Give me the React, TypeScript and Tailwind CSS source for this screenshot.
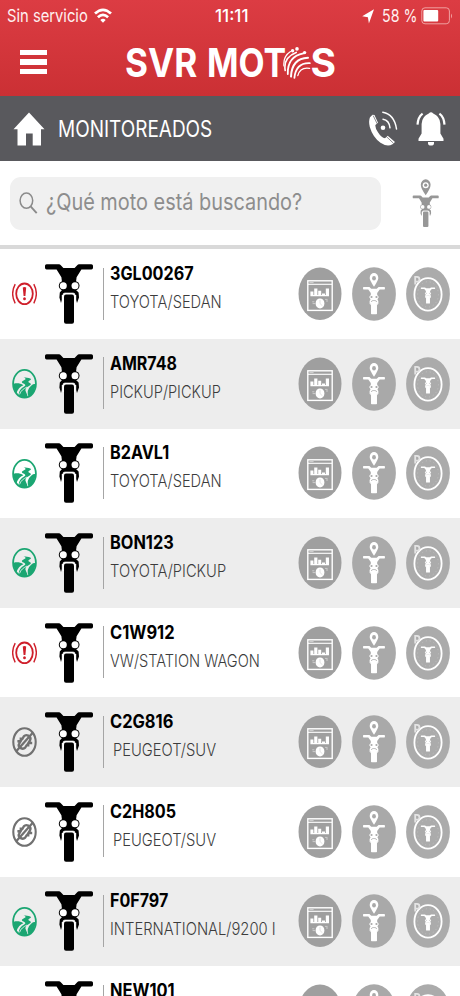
import { useLayoutEffect, useRef, useState } from "react";

type Status = "alert" | "moving" | "offline";

/** One line of text condensed or widened to an exact width. */
function FitText({ text, width, className }: { text: string; width: number; className: string }) {
  const ref = useRef<HTMLSpanElement>(null);
  const [scale, setScale] = useState(1);
  useLayoutEffect(() => {
    if (ref.current) setScale(width / ref.current.offsetWidth);
  }, [text, width]);
  return (
    <div className="flex shrink-0 whitespace-nowrap" style={{ width }}>
      <span ref={ref} className={`shrink-0 origin-left ${className}`} style={{ transform: `scaleX(${scale})` }}>
        {text}
      </span>
    </div>
  );
}

function MotoShape({ color, hole }: { color: string; hole: string }) {
  return (
    <g>
      <path
        d="M1.6 .2H14Q15 .2 15.8 1.2L18.4 4H29.6L32.2 1.2Q33 .2 34 .2H46.4Q48 .2 48 1.8V3.8Q48 5.4 46.4 5.4H36.4L31.6 13.2L31 18H17L16.4 13.2L11.6 5.4H1.6Q0 5.4 0 3.8V1.8Q0 .2 1.6 .2Z"
        fill={color}
      />
      <path d="M17 15H31V26L33.6 28.4L34 33.5L32 39L31.2 36V31H16.8V36L16 39L14.4 33.5L14.8 28.4L17 26Z" fill={color} />
      <circle cx="18.3" cy="21.7" r="4.5" fill={color} />
      <circle cx="30" cy="21.7" r="4.5" fill={color} />
      <circle cx="18.3" cy="21.7" r="3.5" fill={hole} />
      <circle cx="30" cy="21.7" r="3.5" fill={hole} />
      <path d="M17.9 38V31Q17.9 29 19.9 29H28.1Q30.1 29 30.1 31V38" fill={hole} stroke={hole} strokeWidth=".6" />
      <rect x="19" y="30.6" width="10" height="29.2" rx="2" fill={color} />
    </g>
  );
}

/** Simplified front view used inside the small round buttons. */
function MiniMoto({ hole }: { hole: string }) {
  return (
    <g>
      <path
        d="M1.5 0H14L18 3.6H30L34 0H46.5Q48 0 48 2.7T46.5 5.6H36.5L31 13V17.5L34.6 22L31.5 27L33.5 31V37L31.5 40L30.5 34V59Q30.5 60 29 60H19Q17.5 60 17.5 59V34L16.5 40L14.5 37V31L16.5 27L13.4 22L17 17.5V13L11.5 5.6H1.5Q0 5.6 0 2.7T1.5 0Z"
        fill="#fff"
      />
      <circle cx="18.6" cy="22" r="2.4" fill={hole} />
      <circle cx="29.4" cy="22" r="2.4" fill={hole} />
      <path d="M18 33Q18 29.6 24 29.6T30 33" fill="none" stroke={hole} strokeWidth="1.6" />
    </g>
  );
}

function StatusIcon({ status }: { status: Status }) {
  if (status === "alert") {
    return (
      <svg className="h-8 w-[25px] shrink-0" viewBox="0 0 25 32" fill="none" stroke="#cf1f2b">
        <ellipse cx="12.5" cy="15.8" rx="8.3" ry="10.3" strokeWidth="1.8" />
        <path d="M3.2 6.2Q-1.9 15.8 3.2 25.4M21.8 6.2Q26.9 15.8 21.8 25.4" strokeWidth="1.4" />
        <path d="M10.8 9.6Q12.5 8.4 14.2 9.6L13.4 18.1H11.6Z" fill="#cf1f2b" stroke="none" />
        <ellipse cx="12.5" cy="20.7" rx="1.4" ry="1.5" fill="#cf1f2b" stroke="none" />
      </svg>
    );
  }
  if (status === "moving") {
    return (
      <svg className="h-8 w-[25px] shrink-0" viewBox="0 0 25 32" fill="none">
        <path d="M1.8 15.8C5 14.8 8.4 15.4 11.4 17.2Q6.2 19.2 4.6 25.2C2.4 22.6 1.4 19.6 1.8 15.8Z" fill="#1ba672" />
        <path
          d="M11.6 9.2L16.8 9.9Q20.4 10.8 18 12.3Q15 13.8 17.4 14.8Q20.6 16.2 17 18Q11.6 20.6 14.2 24.4Q15.6 26.6 15.6 29.6H10.5L6.4 27.2Q7 21.4 12.2 18.6Q14.6 17.2 12 15.8Q7.6 14 12 12.2Q15.4 11 11.6 9.2Z"
          fill="#1ba672"
        />
        <path d="M19.4 17.4Q21.4 15.6 23.3 16Q23.3 25.4 16.6 29Q13.8 22 19.4 17.4Z" fill="#1ba672" />
        <path d="M7.6 26.4C8.4 22.8 11.6 20.8 15 19" stroke="#eefaf5" strokeWidth=".8" />
        <ellipse cx="12.5" cy="15.8" rx="11.4" ry="13.9" stroke="#1ba672" strokeWidth="1.8" />
      </svg>
    );
  }
  return (
    <svg className="h-8 w-[25px] shrink-0" viewBox="0 0 25 32" fill="none" stroke="#717171">
      <ellipse cx="12.5" cy="16" rx="11.2" ry="13.8" strokeWidth="2.1" />
      <path d="M21 6.4L4 25.6" strokeWidth="2.3" />
      <path d="M7.6 12.8H10.4L11.8 10.4Q13.6 8.4 16.2 9.6Q19.6 11.6 18 14.4L16.4 17H20.2M17.4 19.4H14.6L13.2 21.6Q11.4 23.4 8.8 22.2Q5.6 20.2 7.2 17.6L8.6 15.2H5.4" strokeWidth="2.4" />
    </svg>
  );
}

function ReportButton() {
  return (
    <svg className="h-[54px] w-11" viewBox="0 0 44 54" fill="none">
      <ellipse cx="22" cy="26.8" rx="21.5" ry="26.2" fill="#9f9f9f" />
      <rect x="9.8" y="13.8" width="24.4" height="29.6" stroke="#fff" strokeWidth="1.4" />
      <path d="M10 17.3H34" stroke="#fff" strokeWidth="1.1" />
      <path d="M11.4 15.6H15.6" stroke="#ddd" strokeWidth=".8" />
      <path d="M12.4 24.6H15.4V28.6H12.4ZM16.2 21.6H19.4V28.6H16.2ZM20.2 23.8H23.2V28.6H20.2ZM24 26.4H27V28.6H24ZM27.8 21.4H31V28.6H27.8ZM12.4 28.1H31V29.2H12.4Z" fill="#fff" />
      <ellipse cx="22" cy="36.4" rx="4.4" ry="5" fill="#fff" />
      <path d="M22 33V36.5L24.4 38.8" stroke="#cfcfcf" strokeWidth=".6" />
      <path d="M14.2 34.8H16.4M14.6 36.6H17M27 32.4H29.6M28 34H30" stroke="#d5d5d5" strokeWidth=".8" />
    </svg>
  );
}

function LocateButton() {
  return (
    <svg className="h-[54px] w-11" viewBox="0 0 44 54" fill="none">
      <ellipse cx="22" cy="27" rx="21.9" ry="26.8" fill="#a9a9a9" />
      <path d="M22 19.8Q17.7 13.3 17.7 11A4.3 5 0 0 1 26.3 11Q26.3 13.3 22 19.8Z" fill="#fff" />
      <ellipse cx="22" cy="11.2" rx="1.9" ry="2.3" fill="#a9a9a9" />
      <g transform="translate(11 20) scale(.458 .455)">
        <MiniMoto hole="#a9a9a9" />
      </g>
    </svg>
  );
}

function ParkingButton() {
  return (
    <svg className="h-[54px] w-11" viewBox="0 0 44 54" fill="none">
      <ellipse cx="22" cy="27" rx="21.9" ry="26.8" fill="#ababab" />
      <ellipse cx="22" cy="27.4" rx="13.6" ry="16.3" stroke="#fff" strokeWidth="1.8" />
      <ellipse cx="22" cy="27.4" rx="10.4" ry="12.7" stroke="#c2c2c2" strokeWidth=".9" strokeDasharray="1 3" />
      <path d="M9.2 17.4V9.9H11Q13.4 9.9 13.4 12.3T11 14.7H9.8" stroke="#e4e4e4" strokeWidth="1.8" />
      <g transform="translate(14.8 20.4) scale(.3 .27)">
        <MiniMoto hole="#d8d8d8" />
      </g>
    </svg>
  );
}

interface Vehicle {
  plate: string;
  plateWidth: number;
  model: string;
  modelWidth: number;
  status: Status;
  indent?: boolean;
}

const vehicles: Vehicle[] = [
  { plate: "3GL00267", plateWidth: 83.5, model: "TOYOTA/SEDAN", modelWidth: 111.5, status: "alert" },
  { plate: "AMR748", plateWidth: 67, model: "PICKUP/PICKUP", modelWidth: 111, status: "moving" },
  { plate: "B2AVL1", plateWidth: 59, model: "TOYOTA/SEDAN", modelWidth: 111.5, status: "moving" },
  { plate: "BON123", plateWidth: 64, model: "TOYOTA/PICKUP", modelWidth: 116, status: "moving" },
  { plate: "C1W912", plateWidth: 64.5, model: "VW/STATION WAGON", modelWidth: 150, status: "alert" },
  { plate: "C2G816", plateWidth: 63.5, model: "PEUGEOT/SUV", modelWidth: 103, status: "offline", indent: true },
  { plate: "C2H805", plateWidth: 66, model: "PEUGEOT/SUV", modelWidth: 103, status: "offline", indent: true },
  { plate: "F0F797", plateWidth: 58.5, model: "INTERNATIONAL/9200 I", modelWidth: 166, status: "moving" },
  { plate: "NEW101", plateWidth: 65, model: "TOYOTA/SEDAN", modelWidth: 111.5, status: "moving" },
];

function VehicleRow({ vehicle }: { vehicle: Vehicle }) {
  return (
    <li className="flex h-[89.6px] shrink-0 items-start bg-white pl-3 even:bg-[#ededed]">
      <div className="pt-[29px]">
        <StatusIcon status={vehicle.status} />
      </div>
      <svg className="mt-[14.8px] ml-2 h-[60px] w-12 shrink-0" viewBox="0 0 48 60">
        <MotoShape color="#000" hole="#fff" />
      </svg>
      <div className="mt-[18.5px] ml-[10px] h-[52px] w-px shrink-0 bg-[#a5a5a5]" />
      <div className="ml-[5.5px] flex w-[188.5px] shrink-0 flex-col gap-[9px] pt-[13.8px]">
        <FitText text={vehicle.plate} width={vehicle.plateWidth} className="text-[18.4px] leading-5 font-bold text-black" />
        <div className={vehicle.indent ? "pl-[3px]" : ""}>
          <FitText text={vehicle.model} width={vehicle.modelWidth} className="text-[17.6px] leading-5 font-light text-[#3c3c3c]" />
        </div>
      </div>
      <div className="flex gap-[10px] pt-[17.8px]">
        <ReportButton />
        <LocateButton />
        <ParkingButton />
      </div>
    </li>
  );
}

function StatusBar() {
  return (
    <div className="flex h-8 items-center text-[#fff0f0]">
      <div className="flex w-[215px] items-center gap-[6px] pl-[7px]">
        <FitText text="Sin servicio" width={80.5} className="text-[17.6px] leading-8" />
        <svg className="h-4 w-[18px]" viewBox="0 0 18 16" fill="none" stroke="#fff" strokeWidth="2.7">
          <path d="M1 5.6Q9 -2 17 5.6M3.9 9.3Q9 4.6 14.1 9.3" />
          <path d="M6.3 11.9Q9 9.6 11.7 11.9L9 14.8Z" fill="#fff" stroke="none" />
        </svg>
      </div>
      <div className="w-[147px]">
        <FitText text="11:11" width={34} className="text-[17.6px] leading-8 font-medium text-white" />
      </div>
      <svg className="h-[15px] w-3" viewBox="0 0 12 15" fill="#fff">
        <path d="M12 .3L6.9 14.4L5.9 8.2L.2 7.3Z" />
      </svg>
      <div className="ml-[7.5px]">
        <FitText text="58 %" width={35.5} className="text-[17.6px] leading-8" />
      </div>
      <svg className="ml-[3.5px] h-[18px] w-8" viewBox="0 0 32 18" fill="none">
        <rect x=".8" y=".8" width="27.6" height="16" rx="3.2" stroke="#f0a0a0" strokeWidth="1" />
        <rect x="2.4" y="3.1" width="14.8" height="11.4" rx="1" fill="#fff" />
        <path d="M30 6.5Q32 9 30 11.5Z" fill="#f0a0a0" />
      </svg>
    </div>
  );
}

function Brand() {
  return (
    <div className="flex h-[62px] items-center text-[39px] leading-[62px] font-bold text-white">
      <div className="ml-px">
        <FitText text="SVR" width={72} className="" />
      </div>
      <div className="ml-[9.5px]">
        <FitText text="MOT" width={79} className="" />
      </div>
      <svg className="-ml-[3px] h-8 w-7 shrink-0" viewBox="0 0 28 32" fill="none" stroke="#fff" strokeLinecap="round">
        <path d="M7.5 4.6Q0 9.5 .9 19" strokeWidth="1.2" />
        <path d="M13.2 5.4Q0 10.5 2.2 23.5" strokeWidth="1.6" />
        <path d="M20.5 6.4Q4.2 9.5 4.8 27" strokeWidth="1.8" />
        <path d="M25 10.8Q8.8 11.5 8 29.6" strokeWidth="2" />
        <path d="M26.8 16.2Q13 15.6 11.4 30.8" strokeWidth="1.8" />
        <path d="M26.6 21.4Q17.2 19.8 14.8 28.6" strokeWidth="1.3" />
        <circle cx="9.6" cy="3.8" r="1.7" fill="#fff" stroke="none" />
        <circle cx="14" cy="1.9" r="1.8" fill="#fff" stroke="none" />
        <circle cx="21.6" cy="5.6" r="1.7" fill="#fff" stroke="none" />
      </svg>
      <FitText text="S" width={26} className="" />
    </div>
  );
}

export default function App() {
  return (
    <div className="flex h-[996px] w-[460px] flex-col overflow-hidden bg-white font-['Inter','Liberation_Sans',sans-serif]">
      <header className="h-24 shrink-0 bg-linear-to-b from-[#dc3c43] to-[#cb3034]">
        <StatusBar />
        <div className="flex items-center">
          <div className="ml-5 flex w-[104px] flex-col gap-[4.5px] pb-[2px]">
            <div className="h-[5.3px] w-[27px] bg-white" />
            <div className="h-[5.3px] w-[27px] bg-white" />
            <div className="h-[5.3px] w-[27px] bg-white" />
          </div>
          <Brand />
        </div>
      </header>

      <div className="flex h-[65px] shrink-0 items-center bg-[#59595d] pl-[13px]">
        <svg className="h-[34px] w-8" viewBox="0 0 32 34" fill="#fff">
          <path d="M16 .5L31.5 17.3H28V33.5H19.7V21.5H13V33.5H4.5V17.3H.5Z" />
        </svg>
        <div className="ml-[12.5px]">
          <FitText text="MONITOREADOS" width={154.5} className="text-[22.6px] leading-[65px] text-white" />
        </div>
        <svg className="ml-[156px] h-9 w-[31px]" viewBox="0 0 31 36" fill="none" stroke="#fff" strokeLinecap="round">
          <path d="M2 6.2Q.3 10 1.8 16Q4.8 26.2 12.5 31.8Q19.5 36.5 24.5 33.2L27 31L19.7 24.8L17 27.2Q13.5 27 9.8 21Q7 16.5 7.4 14L10 11.8L6.5 4L4.5 3.8Z" fill="#fff" stroke="none" />
          <path d="M5.4 5L9 12.4M18.6 25.8L25 31.8" stroke="#59595d" strokeWidth=".7" />
          <circle cx="15" cy="16.8" r="2.3" fill="#fff" stroke="none" />
          <path d="M15 8.2Q21.2 9.2 22 16.8M14.8 1.2Q26.5 3.5 28.5 18" strokeWidth="1.5" />
        </svg>
        <svg className="ml-[17px] h-9 w-[30px]" viewBox="0 0 30 36" fill="#fff">
          <path d="M12.8 2.6Q15 0 17.2 2.6Q24 5.3 24.4 13V22.6L27.5 27.7V30H2.5V27.7L5.6 22.6V13Q6 5.3 12.8 2.6ZM12 31H18V32.2Q18 34.6 15 34.6T12 32.2Z" />
          <path d="M6.6 2.6Q2 6 1.5 13.6M23.4 2.6Q28 6 28.5 13.6" fill="none" stroke="#fff" strokeWidth="2.2" />
        </svg>
      </div>

      <div className="flex h-[88.4px] shrink-0 items-start border-b-[4px] border-[#d9d9d9] bg-white pt-[15.5px] pl-[10px]">
        <div className="flex h-[53px] w-[371px] items-center rounded-[11px] bg-[#f0f0f0] pl-[9px]">
          <svg className="h-[22px] w-[19px]" viewBox="0 0 19 22" fill="none" stroke="#8b8b8b" strokeWidth="1.5">
            <ellipse cx="7.4" cy="8.6" rx="6.3" ry="7.6" />
            <path d="M11.6 14.3L17.7 21.2" strokeWidth="1.9" />
          </svg>
          <div className="ml-[7.5px] pb-[2px]">
            <FitText text="¿Qué moto está buscando?" width={256.5} className="text-[23.5px] leading-[50px] text-[#8d8d8d]" />
          </div>
        </div>
        <svg className="mt-[2.5px] ml-[31px] h-[50px] w-7" viewBox="0 0 28 50">
          <path d="M13.7 16.2Q8.8 9.5 8.8 5.8A4.9 5.5 0 0 1 18.6 5.8Q18.6 9.5 13.7 16.2Z" fill="#979797" />
          <circle cx="13.7" cy="6.2" r="3" fill="#fff" />
          <circle cx="13.7" cy="6.2" r="1.6" fill="#979797" />
          <g transform="translate(.7 16.4) scale(.542 .53)">
            <MotoShape color="#979797" hole="#fff" />
          </g>
        </svg>
      </div>

      <ul className="-mt-px flex min-h-0 flex-1 flex-col overflow-hidden pt-px">
        {vehicles.map((vehicle) => (
          <VehicleRow key={vehicle.plate} vehicle={vehicle} />
        ))}
      </ul>
    </div>
  );
}
